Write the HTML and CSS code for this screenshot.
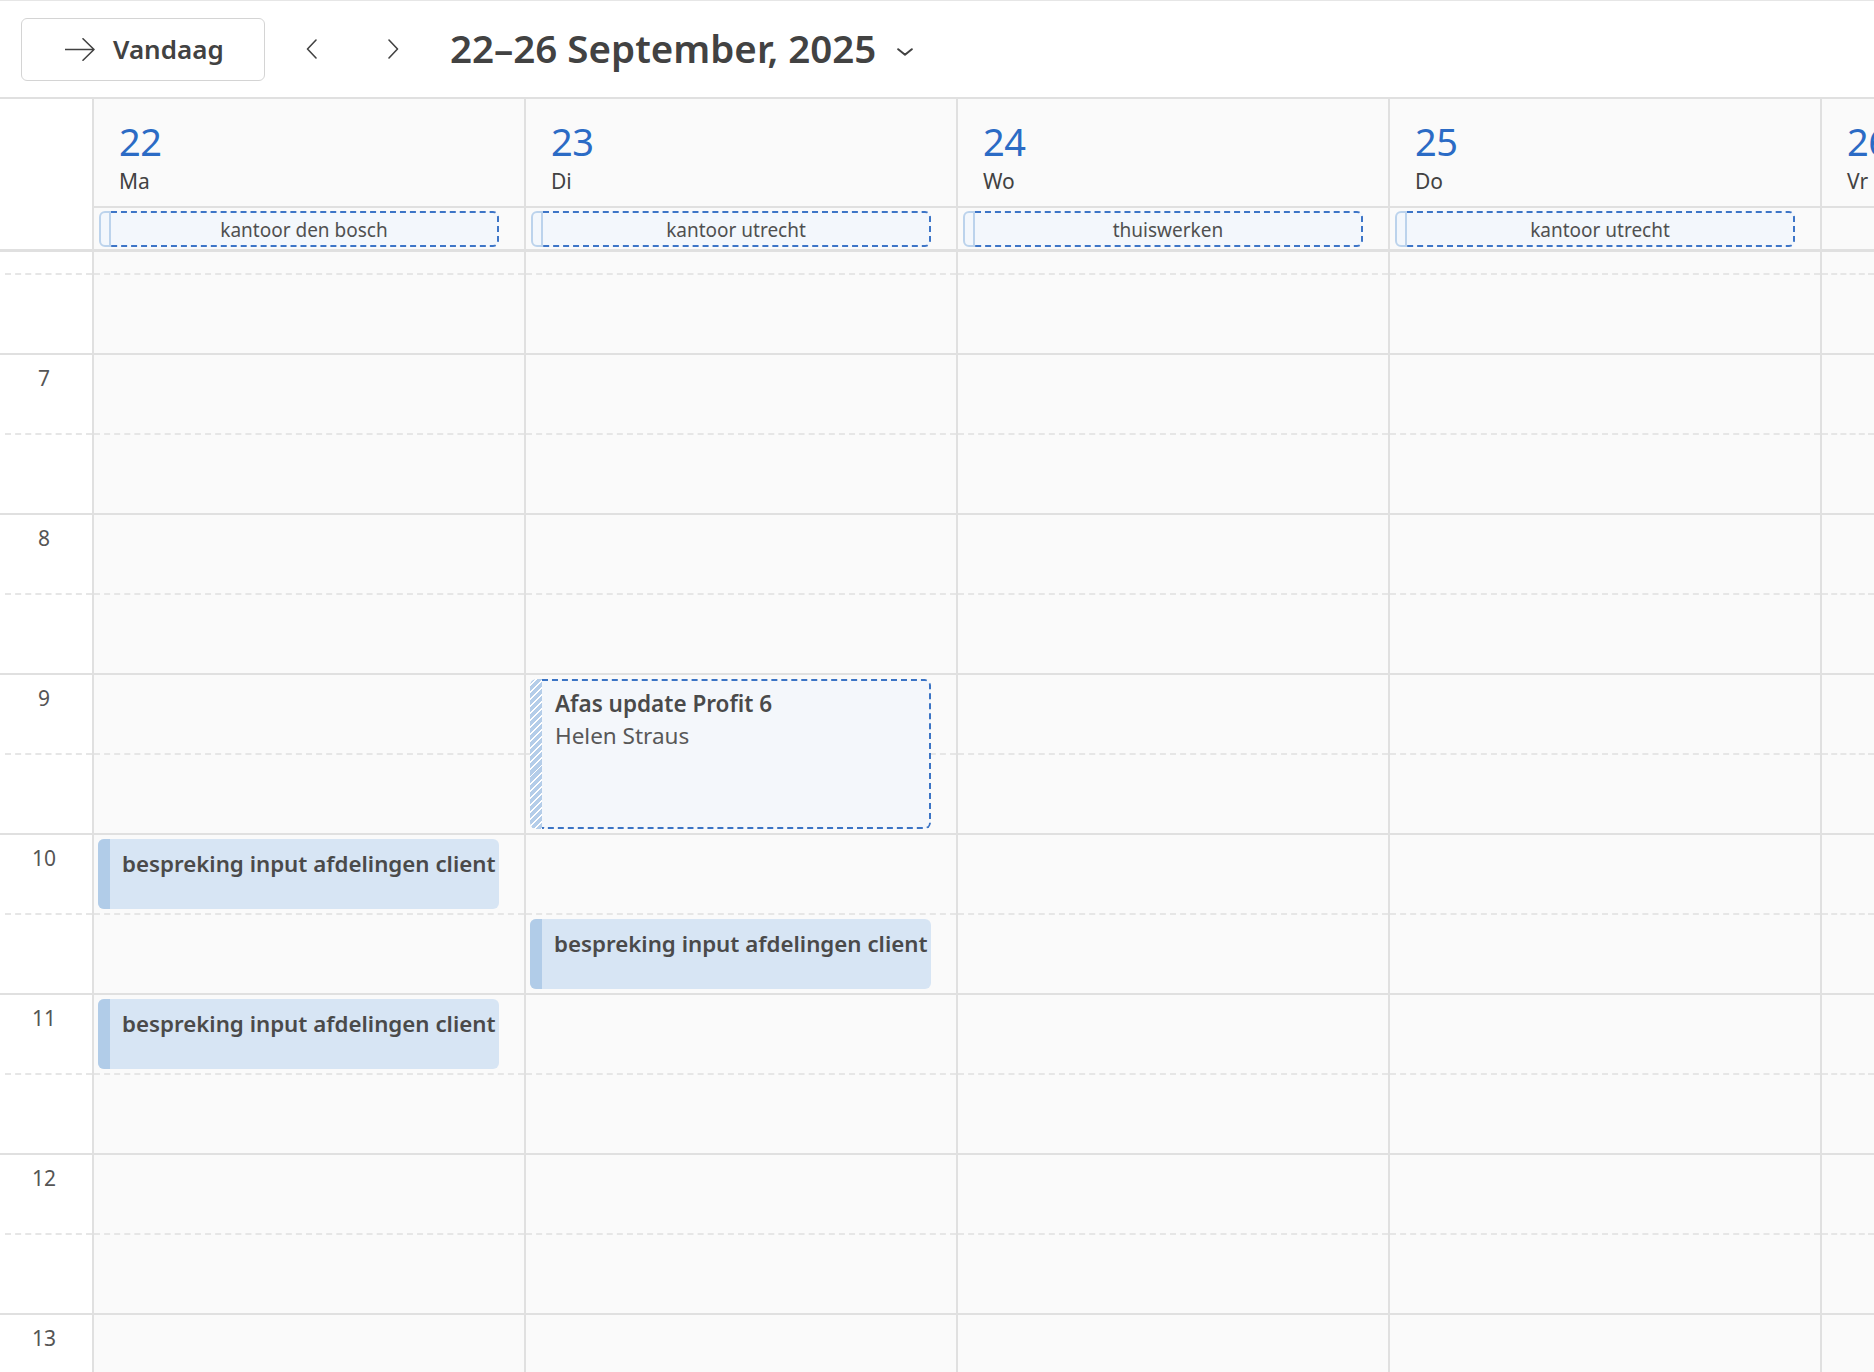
FILE: index.html
```html
<!DOCTYPE html>
<html lang="nl">
<head>
<meta charset="utf-8">
<title>Agenda</title>
<link rel="stylesheet" href="styles.css">
</head>
<body>
<div class="toolbar">
  <button class="today-btn">
    <svg class="arrow" width="30" height="23" viewBox="0 0 30 23"><path d="M0.5 11.5H29M18 0.8L29 11.5L18 22.2" fill="none" stroke="#424242" stroke-width="1.6" stroke-linejoin="round" stroke-linecap="round"/></svg>
    <span>Vandaag</span>
  </button>
  <svg class="chev chev-l" width="11" height="20" viewBox="0 0 11 20"><path d="M10 1L1.5 10L10 19" fill="none" stroke="#424242" stroke-width="1.6" stroke-linecap="round" stroke-linejoin="round"/></svg>
  <svg class="chev chev-r" width="11" height="20" viewBox="0 0 11 20"><path d="M1 1L9.5 10L1 19" fill="none" stroke="#424242" stroke-width="1.6" stroke-linecap="round" stroke-linejoin="round"/></svg>
  <h1 class="title">22–26 September, 2025</h1>
  <svg class="caret" width="16" height="8" viewBox="0 0 16 8"><path d="M1.2 1.2L8 6.8L14.8 1.2" fill="none" stroke="#424242" stroke-width="2" stroke-linecap="round" stroke-linejoin="round"/></svg>
</div>

<div class="head">
  <div class="corner"></div>
  <div class="dh"><div class="num">22</div><div class="dn">Ma</div></div>
  <div class="dh"><div class="num">23</div><div class="dn">Di</div></div>
  <div class="dh"><div class="num">24</div><div class="dn">Wo</div></div>
  <div class="dh"><div class="num">25</div><div class="dn">Do</div></div>
  <div class="dh"><div class="num">26</div><div class="dn">Vr</div></div>
  <div class="ad"><div class="ad-ev"><div class="ad-stripe"></div><div class="ad-body">kantoor den bosch</div></div></div>
  <div class="ad"><div class="ad-ev"><div class="ad-stripe"></div><div class="ad-body">kantoor utrecht</div></div></div>
  <div class="ad"><div class="ad-ev"><div class="ad-stripe"></div><div class="ad-body">thuiswerken</div></div></div>
  <div class="ad"><div class="ad-ev"><div class="ad-stripe"></div><div class="ad-body">kantoor utrecht</div></div></div>
  <div class="ad"></div>
</div>

<div class="scroll">
  <div class="grid">
    <div class="gut">
      <div class="hr"><div class="s"></div><div class="d"></div></div>
      <div class="hr"><div class="s"><div class="lbl">7</div></div><div class="d"></div></div>
      <div class="hr"><div class="s"><div class="lbl">8</div></div><div class="d"></div></div>
      <div class="hr"><div class="s"><div class="lbl">9</div></div><div class="d"></div></div>
      <div class="hr"><div class="s"><div class="lbl">10</div></div><div class="d"></div></div>
      <div class="hr"><div class="s"><div class="lbl">11</div></div><div class="d"></div></div>
      <div class="hr"><div class="s"><div class="lbl">12</div></div><div class="d"></div></div>
      <div class="hr"><div class="s"><div class="lbl">13</div></div><div class="d"></div></div>
    </div>

    <div class="day">
      <div class="hr"><div class="s"></div><div class="d"></div></div>
      <div class="hr"><div class="s"></div><div class="d"></div></div>
      <div class="hr"><div class="s"></div><div class="d"></div></div>
      <div class="hr"><div class="s"></div><div class="d"></div></div>
      <div class="hr"><div class="s"></div><div class="d"></div></div>
      <div class="hr"><div class="s"></div><div class="d"></div></div>
      <div class="hr"><div class="s"></div><div class="d"></div></div>
      <div class="hr"><div class="s"></div><div class="d"></div></div>
      <div class="ev solid" style="top:646px;height:70px"><div class="st"></div><div class="tx">bespreking input afdelingen client</div></div>
      <div class="ev solid" style="top:806px;height:70px"><div class="st"></div><div class="tx">bespreking input afdelingen client</div></div>
    </div>

    <div class="day">
      <div class="hr"><div class="s"></div><div class="d"></div></div>
      <div class="hr"><div class="s"></div><div class="d"></div></div>
      <div class="hr"><div class="s"></div><div class="d"></div></div>
      <div class="hr"><div class="s"></div><div class="d"></div></div>
      <div class="hr"><div class="s"></div><div class="d"></div></div>
      <div class="hr"><div class="s"></div><div class="d"></div></div>
      <div class="hr"><div class="s"></div><div class="d"></div></div>
      <div class="hr"><div class="s"></div><div class="d"></div></div>
      <div class="ev tent" style="top:486px;height:150px"><div class="st hatch"></div><div class="tb"><div class="tt">Afas update Profit 6</div><div class="ts">Helen Straus</div></div></div>
      <div class="ev solid" style="top:726px;height:70px"><div class="st"></div><div class="tx">bespreking input afdelingen client</div></div>
    </div>

    <div class="day">
      <div class="hr"><div class="s"></div><div class="d"></div></div>
      <div class="hr"><div class="s"></div><div class="d"></div></div>
      <div class="hr"><div class="s"></div><div class="d"></div></div>
      <div class="hr"><div class="s"></div><div class="d"></div></div>
      <div class="hr"><div class="s"></div><div class="d"></div></div>
      <div class="hr"><div class="s"></div><div class="d"></div></div>
      <div class="hr"><div class="s"></div><div class="d"></div></div>
      <div class="hr"><div class="s"></div><div class="d"></div></div>
    </div>

    <div class="day">
      <div class="hr"><div class="s"></div><div class="d"></div></div>
      <div class="hr"><div class="s"></div><div class="d"></div></div>
      <div class="hr"><div class="s"></div><div class="d"></div></div>
      <div class="hr"><div class="s"></div><div class="d"></div></div>
      <div class="hr"><div class="s"></div><div class="d"></div></div>
      <div class="hr"><div class="s"></div><div class="d"></div></div>
      <div class="hr"><div class="s"></div><div class="d"></div></div>
      <div class="hr"><div class="s"></div><div class="d"></div></div>
    </div>

    <div class="day">
      <div class="hr"><div class="s"></div><div class="d"></div></div>
      <div class="hr"><div class="s"></div><div class="d"></div></div>
      <div class="hr"><div class="s"></div><div class="d"></div></div>
      <div class="hr"><div class="s"></div><div class="d"></div></div>
      <div class="hr"><div class="s"></div><div class="d"></div></div>
      <div class="hr"><div class="s"></div><div class="d"></div></div>
      <div class="hr"><div class="s"></div><div class="d"></div></div>
      <div class="hr"><div class="s"></div><div class="d"></div></div>
    </div>
  </div>
</div>
</body>
</html>
```
FILE: styles.css
```css
* { box-sizing: border-box; }

html, body {
  margin: 0;
  padding: 0;
}

body {
  width: 1874px;
  height: 1372px;
  overflow: hidden;
  background: #ffffff;
  font-family: "Noto Sans", "Open Sans", sans-serif;
  color: #424242;
}

/* ---------- toolbar ---------- */
.toolbar {
  height: 99px;
  border-top: 1px solid #e6e6e6;
  border-bottom: 2px solid #e0e0e0;
  display: flex;
  align-items: center;
}

.today-btn {
  margin-left: 21px;
  width: 244px;
  height: 63px;
  border: 1px solid #d4d4d4;
  border-radius: 6px;
  background: #ffffff;
  display: flex;
  align-items: center;
  gap: 18px;
  padding: 0 0 0 43px;
  font-family: inherit;
  font-size: 26px;
  font-weight: 600;
  color: #424242;
  cursor: pointer;
}

.arrow { flex: none; }

.chev { flex: none; }
.chev-l { margin-left: 41px; }
.chev-r { margin-left: 71px; }

.title {
  margin: 0 0 0 51px;
  font-size: 38.5px;
  line-height: 48px;
  font-weight: 600;
  color: #424242;
  position: relative;
  top: -1px;
}

.caret {
  flex: none;
  margin-left: 21px;
  margin-top: 6px;
}

/* ---------- header ---------- */
.head {
  display: grid;
  grid-template-columns: 92px repeat(4, 432px) 1fr;
  border-bottom: 3px solid #e0e0e0;
}

.corner {
  grid-row: span 2;
  background: #ffffff;
}

.dh {
  height: 109px;
  background: #fafafa;
  border-left: 2px solid #e0e0e0;
  border-bottom: 2px solid #e0e0e0;
  padding: 20px 0 0 25px;
  overflow: hidden;
  white-space: nowrap;
}

.num {
  font-size: 38px;
  line-height: 44px;
  color: #2b6bc5;
  letter-spacing: -0.5px;
}

.dn {
  margin-top: 5px;
  font-size: 21px;
  line-height: 26px;
  color: #424242;
}

.ad {
  height: 41px;
  background: #fafafa;
  border-left: 2px solid #e0e0e0;
  padding: 3px 0 0 5px;
}

.ad-ev {
  display: flex;
  width: 400px;
  height: 36px;
}

.ad-stripe {
  flex: none;
  width: 12px;
  border: 2px solid #bcd3ec;
  border-radius: 6px 0 0 6px;
  background: #f3f7fc;
}

.ad-body {
  flex: 1;
  border: 2px dashed #3d75c7;
  border-left: none;
  border-radius: 0 6px 6px 0;
  background: #f3f7fc;
  display: flex;
  align-items: center;
  justify-content: center;
  padding-top: 1px;
  font-size: 19px;
  color: #505050;
  white-space: nowrap;
  overflow: hidden;
}

/* ---------- time grid ---------- */
.scroll {
  height: 1120px;
  overflow: hidden;
}

.grid {
  display: grid;
  grid-template-columns: 92px repeat(4, 432px) 1fr;
  margin-top: -59px;
}

.gut { background: #ffffff; }

.day {
  position: relative;
  background: #fafafa;
  border-left: 2px solid #e0e0e0;
}

.hr { height: 160px; }

.s {
  height: 80px;
  border-top: 2px solid #e0e0e0;
}

.d {
  height: 80px;
  border-top: 2px dashed #e6e6e6;
}

.gut .d { margin-left: 5px; }

.lbl {
  padding: 11px 4px 0 0;
  text-align: center;
  font-size: 21px;
  line-height: 24px;
  color: #555555;
}

/* ---------- events ---------- */
.ev {
  position: absolute;
  left: 4px;
  width: 401px;
  display: flex;
  border-radius: 6px;
  overflow: hidden;
}

.ev.solid { background: #d7e5f4; }

.st {
  flex: none;
  width: 12px;
  background: #b1cce8;
}

.st.hatch {
  border-radius: 6px 0 0 6px;
  background: repeating-linear-gradient(135deg, #b4cde9 0 3.6px, #ffffff 3.6px 5px);
}

.tx {
  flex: 1;
  min-width: 0;
  padding: 9px 8px 0 12px;
  font-size: 22.3px;
  line-height: 32px;
  font-weight: 600;
  color: #4a4a4a;
  white-space: nowrap;
  overflow: hidden;
}

.tb {
  flex: 1;
  min-width: 0;
  background: #f4f7fb;
  border: 2px dashed #3b74c5;
  border-left: none;
  border-radius: 0 6px 6px 0;
  padding: 7px 8px 0 13px;
  font-size: 22.5px;
  line-height: 32px;
  white-space: nowrap;
  overflow: hidden;
}

.tt {
  font-weight: 600;
  color: #4a4a4a;
}

.ts {
  color: #585858;
}
```
